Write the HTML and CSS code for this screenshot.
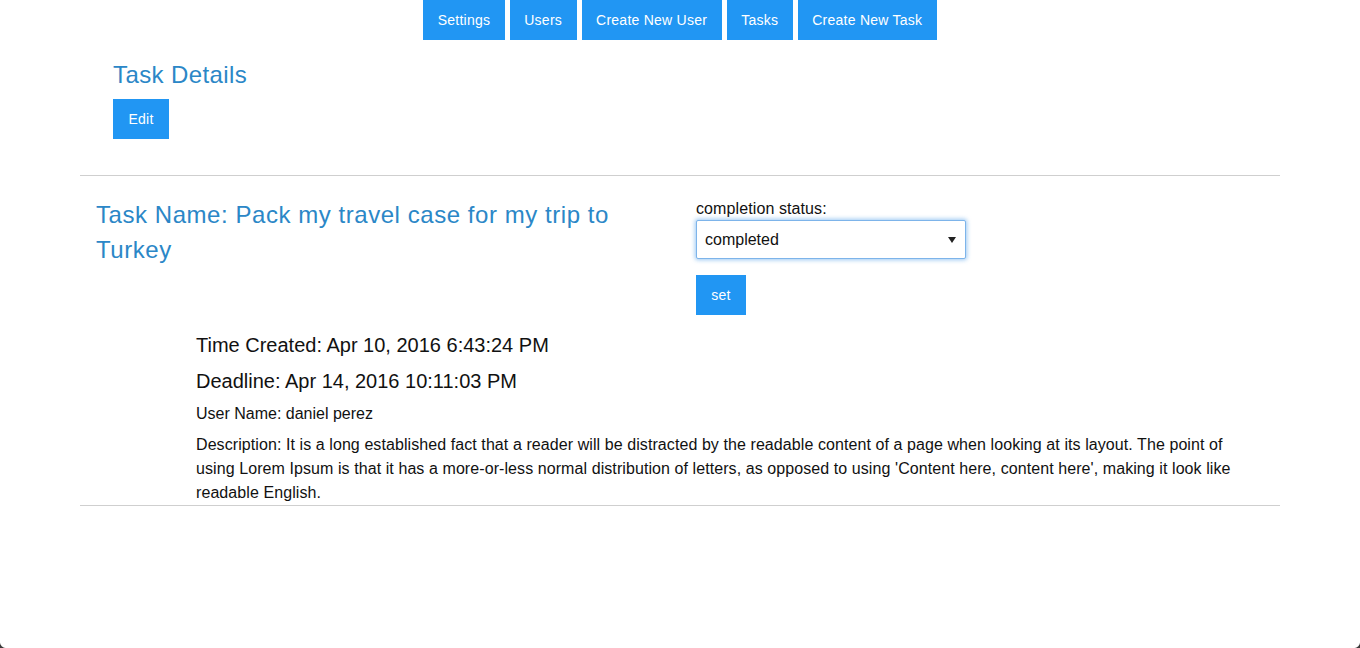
FILE: index.html
```html
<!DOCTYPE html>
<html lang="en">
<head>
<meta charset="utf-8">
<title>Task Details</title>
<link rel="stylesheet" href="styles.css">
</head>
<body>
<nav class="topnav">
  <a class="btn" href="#">Settings</a>
  <a class="btn" href="#">Users</a>
  <a class="btn" href="#">Create New User</a>
  <a class="btn" href="#">Tasks</a>
  <a class="btn" href="#">Create New Task</a>
</nav>
<main class="container">
  <section class="page-head">
    <h2 class="page-title">Task Details</h2>
    <a class="btn" href="#">Edit</a>
  </section>
  <hr class="rule">
  <section class="task-row">
    <div class="col-left">
      <h2 class="task-name">Task Name: Pack my travel case for my trip to Turkey</h2>
    </div>
    <div class="col-right">
      <label class="status-label" for="status">completion status:</label>
      <div class="select-wrap">
        <select id="status" class="status-select">
          <option>completed</option>
          <option>in progress</option>
          <option>not started</option>
        </select>
        <svg class="select-arrow" width="8" height="6" viewBox="0 0 8 6"><path d="M0 0h8L4 6z" fill="#222"/></svg>
      </div>
      <a class="btn" href="#">set</a>
    </div>
  </section>
  <section class="details">
    <p class="big">Time Created: Apr 10, 2016 6:43:24 PM</p>
    <p class="big">Deadline: Apr 14, 2016 10:11:03 PM</p>
    <p class="small">User Name: daniel perez</p>
    <p class="desc">Description: It is a long established fact that a reader will be distracted by the readable content of a page when looking at its layout. The point of using Lorem Ipsum is that it has a more-or-less normal distribution of letters, as opposed to using 'Content here, content here', making it look like readable English.</p>
  </section>
  <hr class="rule">
</main>
<div class="corner corner-left"></div>
<div class="corner corner-right"></div>
</body>
</html>
```

FILE: styles.css
```css
* { box-sizing: border-box; }

html, body {
  margin: 0;
  padding: 0;
  background: #fff;
  font-family: "Liberation Sans", Arial, Helvetica, sans-serif;
  color: #111;
}

body {
  min-height: 648px;
  position: relative;
  overflow: hidden;
}

.btn {
  display: inline-flex;
  align-items: center;
  justify-content: center;
  height: 40px;
  padding: 0 14px;
  background: #2196f3;
  color: #fff;
  font-size: 14px;
  letter-spacing: 0.25px;
  text-decoration: none;
}

.topnav {
  display: flex;
  justify-content: center;
  gap: 5px;
}

.topnav .btn { padding: 0 14.5px; }

.container {
  width: 1200px;
  margin: 0 auto;
}

.page-head {
  padding: 22px 0 0 33px;
  display: flex;
  flex-direction: column;
  align-items: flex-start;
}

.page-title {
  margin: 0 0 11px;
  font-size: 24px;
  font-weight: normal;
  line-height: 26px;
  letter-spacing: 0.4px;
  color: #2b87c7;
}

.page-head .btn { width: 56px; padding: 0; }

.rule {
  margin: 0;
  border: 0;
  border-top: 1px solid #cfcfcf;
  height: 0;
}

.page-head + .rule { margin-top: 36px; }

.task-row {
  display: flex;
  padding-top: 21px;
}

.col-left {
  width: 600px;
  padding: 0 15px 0 16px;
}

.task-name {
  margin: 0;
  font-size: 24px;
  font-weight: normal;
  line-height: 35px;
  letter-spacing: 0.55px;
  color: #2b87c7;
}

.col-right {
  width: 600px;
  padding-left: 16px;
  padding-top: 1px;
  display: flex;
  flex-direction: column;
  align-items: flex-start;
}

.status-label {
  font-size: 16px;
  line-height: 22px;
  letter-spacing: 0.1px;
}

.select-wrap {
  position: relative;
  width: 270px;
  margin-bottom: 16px;
}

.status-select {
  -webkit-appearance: none;
  appearance: none;
  display: block;
  width: 270px;
  height: 39px;
  padding: 0 8px;
  font-family: "Liberation Sans", Arial, sans-serif;
  font-size: 16px;
  color: #111;
  background: #fff;
  border: 1px solid #7db4ea;
  border-radius: 2px;
  box-shadow: 0 0 4px 1px rgba(102, 170, 235, 0.65);
  outline: none;
}

.select-arrow {
  position: absolute;
  right: 10px;
  top: 17px;
  pointer-events: none;
}

.col-right .btn { width: 50px; padding: 0; }

.details {
  padding: 16px 30px 0 116px;
}

.details p { margin: 0 0 8px; }

.details .big { font-size: 20px; line-height: 28px; }

.details .small { font-size: 16px; line-height: 22px; }

.details .desc { font-size: 16px; line-height: 24px; letter-spacing: 0.08px; margin: 0; }

.corner {
  position: absolute;
  bottom: 0;
  width: 6px;
  height: 6px;
}

.corner-left {
  left: 0;
  background: radial-gradient(circle at 6px 0, transparent 5.5px, #3a3a3a 6.5px);
}

.corner-right {
  right: 0;
  background: radial-gradient(circle at 0 0, transparent 5.5px, #3a3a3a 6.5px);
}
```
